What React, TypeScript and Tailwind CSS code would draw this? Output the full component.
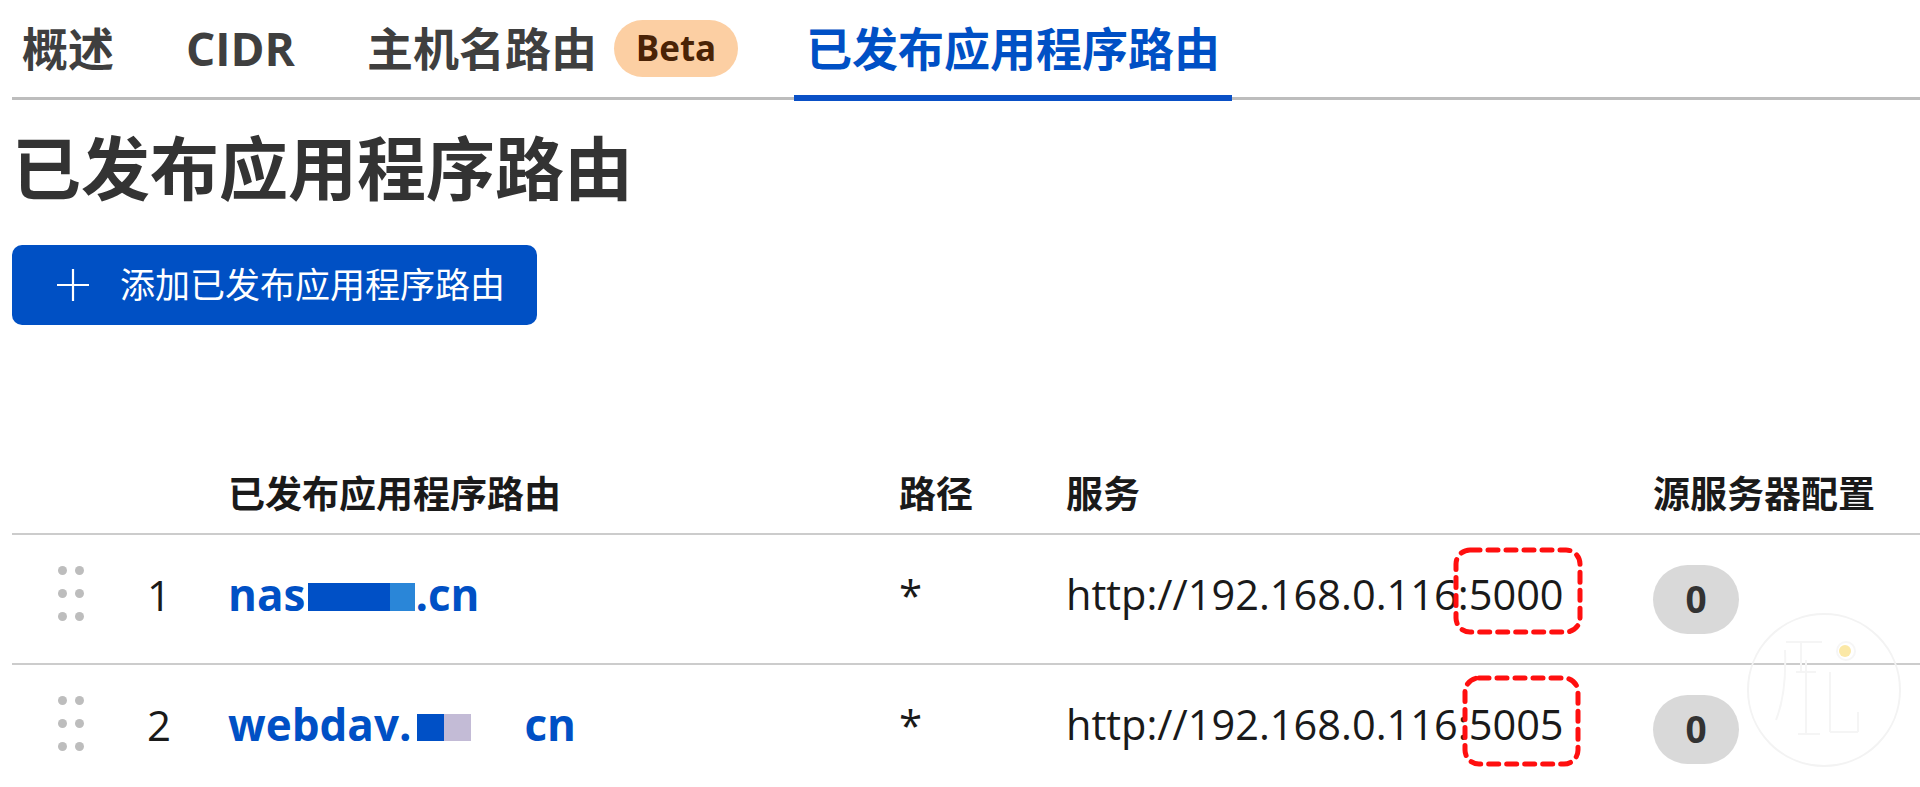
import type { ReactNode } from 'react'

type Route = {
  index: number
  name: ReactNode
  path: string
  host: string
  port: string
  origins: number
  mark: { box: string; w: number; h: number }
}

/** Hand-drawn looking dashed marker laid over the port number. */
function DashedBox({ box, w, h }: { box: string; w: number; h: number }): JSX.Element {
  return (
    <svg className={`pointer-events-none absolute ${box}`} width={w} height={h} viewBox={`0 0 ${w} ${h}`}>
      <rect
        x="3"
        y="3"
        width={w - 6}
        height={h - 6}
        rx="14"
        fill="none"
        stroke="#ff0f0f"
        strokeWidth="5"
        strokeDasharray="10 8"
        strokeLinecap="round"
      />
    </svg>
  )
}

function DragHandle(): JSX.Element {
  return (
    <div className="grid w-fit grid-cols-2 gap-x-[8px] gap-y-[14px]">
      {Array.from({ length: 6 }).map((_, i) => (
        <span key={i} className="h-[9px] w-[9px] rounded-full bg-[#bdbdbd]" />
      ))}
    </div>
  )
}

function PlusIcon(): JSX.Element {
  return (
    <svg width="34" height="34" viewBox="0 0 34 34" aria-hidden>
      <path d="M17 1v32M1 17h32" stroke="#fff" strokeWidth="2.2" fill="none" />
    </svg>
  )
}

function Watermark(): JSX.Element {
  return (
    <svg className="pointer-events-none absolute left-[1746px] top-[612px]" width="158" height="158" viewBox="0 0 158 158">
      <circle cx="78" cy="78" r="76" fill="none" stroke="#f3f3f3" strokeWidth="2" />
      <path d="M30 108c8-20 10-45 9-70M40 30h36M55 30v30M50 60h20M60 48v74M52 122h22" fill="none" stroke="#f5f5f5" strokeWidth="2" />
      <path d="M84 60v60M84 120h28M112 100v20" fill="none" stroke="#f5f5f5" strokeWidth="2" />
      <circle cx="100" cy="39" r="9" fill="none" stroke="#f6f6f6" strokeWidth="2" />
      <circle cx="99" cy="39" r="6" fill="#fbe8a6" />
    </svg>
  )
}

const routes: Route[] = [
  {
    index: 1,
    name: (
      <>
        nas
        <span className="ml-[3px] inline-block h-[28px] w-[82px] bg-[#0050c6]" />
        <span className="inline-block h-[28px] w-[25px] bg-[#2a86d8]" />
        .cn
      </>
    ),
    path: '*',
    host: 'http://192.168.0.116',
    port: '5000',
    origins: 0,
    mark: { box: 'left-[387px] top-[12px]', w: 130, h: 88 },
  },
  {
    index: 2,
    name: (
      <>
        webdav.
        <span className="ml-[5px] inline-block h-[27px] w-[27px] bg-[#0050c6]" />
        <span className="inline-block h-[27px] w-[27px] bg-[#c3bbd6]" />
        <span className="inline-block w-[54px]" />
        cn
      </>
    ),
    path: '*',
    host: 'http://192.168.0.116',
    port: '5005',
    origins: 0,
    mark: { box: 'left-[396px] top-[10px]', w: 119, h: 92 },
  },
]

const cols = 'grid grid-cols-[135px_81px_671px_167px_587px_1fr]'

export default function App(): JSX.Element {
  return (
    <div className="relative min-h-[787px] overflow-hidden bg-white pl-3 font-['Open_Sans','Noto_Sans_CJK_SC',sans-serif] text-[#1a1a1a]">
      <nav className="flex h-[100px] border-b-[3px] border-[#bdbdbd]">
        <div className="-ml-1.5 flex gap-10 text-[46px] font-bold text-[#3f3f3f]">
          <a className="flex h-full items-center px-4">概述</a>
          <a className="flex h-full items-center px-4">CIDR</a>
          <a className="flex h-full items-center gap-[17px] px-4">
            主机名路由
            <span className="flex h-[57px] w-[124px] items-center justify-center rounded-full bg-[#fccfa3] text-[35px] font-bold text-[#4a2306]">
              Beta
            </span>
          </a>
          <a className="relative flex h-full items-center px-3 text-[#0050c5]">
            已发布应用程序路由
            <span className="absolute -bottom-[4px] left-0 right-0 h-[6px] bg-[#0a50c6]" />
          </a>
        </div>
      </nav>

      <h1 className="mt-[27px] text-[69px] font-bold leading-[83px] text-[#333333]">已发布应用程序路由</h1>

      <button
        type="button"
        className="mt-[35px] flex h-[80px] w-[525px] items-center gap-[30px] rounded-[10px] bg-[#0050c4] pl-[44px] text-[35px] text-white"
      >
        <PlusIcon />
        添加已发布应用程序路由
      </button>

      <div className="mt-[130px]">
        <div className={`${cols} h-[80px] items-center border-b-2 border-[#cccccc] text-[37px] font-bold text-[#1a1a1a]`}>
          <span />
          <span />
          <span>已发布应用程序路由</span>
          <span>路径</span>
          <span>服务</span>
          <span>源服务器配置</span>
        </div>

        {routes.map((r) => (
          <div key={r.index} className={`${cols} h-[130px] items-center border-b-2 border-[#cccccc]`}>
            <div className="pl-[46px] pb-[12px]">
              <DragHandle />
            </div>
            <span className="pb-[10px] text-[42px]">{r.index}</span>
            <span className="pb-[10px] text-[44px] font-bold text-[#0050c5]">{r.name}</span>
            <span className="pb-[10px] text-[42px]">{r.path}</span>
            <div className="relative h-full">
              <span className="absolute inset-y-0 left-0 flex items-center pb-[10px] text-[41.5px] whitespace-nowrap">
                {r.host}:{r.port}
              </span>
              <DashedBox {...r.mark} />
            </div>
            <div>
              <span className="flex h-[69px] w-[86px] items-center justify-center rounded-full bg-[#d9d9d9] text-[37px] font-bold text-[#333333]">
                {r.origins}
              </span>
            </div>
          </div>
        ))}
      </div>

      <Watermark />
    </div>
  )
}
